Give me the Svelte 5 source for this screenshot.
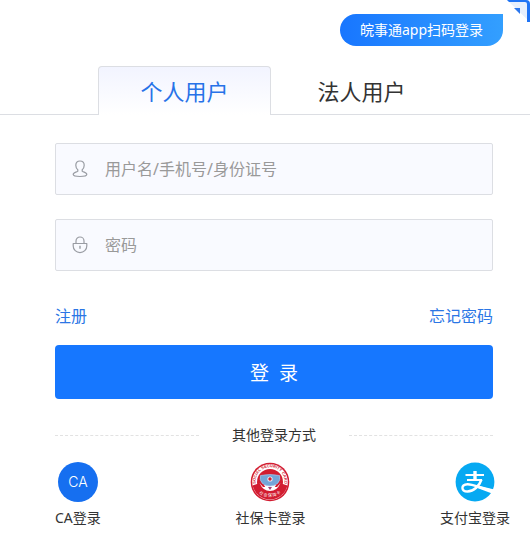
<script>
  let username = $state('');
  let password = $state('');
  let active = $state(0);
  const tabs = ['个人用户', '法人用户'];
</script>

<main>
  <header>
    <button class="scan" type="button">皖事通app扫码登录</button>
    <a class="corner" href="#qr" aria-label="二维码">
      <svg width="24" height="24" viewBox="0 0 24 24">
        <path d="M1 0H20Q24 0 24 4V22L1 0Z" fill="#e6effd" />
        <path d="M1 0H20Q24 0 24 4V22H21V4Q21 2 19 2H3Z" fill="#1f74f5" />
        <path d="M8 8H14V14Z" fill="#2b77ee" />
      </svg>
    </a>
  </header>

  <div class="tabs" role="tablist">
    {#each tabs as tab, i}
      <button type="button" role="tab" class:active={active === i} aria-selected={active === i} onclick={() => (active = i)}>{tab}</button>
    {/each}
  </div>

  <form onsubmit={(e) => e.preventDefault()}>
    <label class="field">
      <svg width="16" height="18" viewBox="0 0 16 18" fill="none" stroke="#999ca3" stroke-width="1.2" stroke-linejoin="round">
        <path d="M8 1C5.2 1 3.8 2.8 3.8 5.3C3.8 7.3 4.6 8.8 5.8 9.8V11.2C5.3 12 1.2 12.2 1.2 14.6C1.2 16.2 4.6 16.5 8 16.5S14.8 16.2 14.8 14.6C14.8 12.2 10.7 12 10.2 11.2V9.8C11.4 8.8 12.2 7.3 12.2 5.3C12.2 2.8 10.8 1 8 1Z" />
      </svg>
      <input type="text" bind:value={username} placeholder="用户名/手机号/身份证号" aria-label="用户名/手机号/身份证号" />
    </label>
    <label class="field">
      <svg width="16" height="18" viewBox="0 0 16 18" fill="none" stroke="#999ca3" stroke-width="1.2" stroke-linejoin="round">
        <path d="M4 7.5V5A4 4 0 0 1 12 5V7.5" />
        <path d="M1.2 7.5H14.8V10A6.8 6.6 0 0 1 1.2 10Z" />
        <path d="M8 9.8V12.8" stroke-width="1.4" />
      </svg>
      <input type="password" bind:value={password} placeholder="密码" aria-label="密码" />
    </label>
    <nav class="links">
      <a href="#register">注册</a>
      <a href="#forgot">忘记密码</a>
    </nav>
    <button class="submit" type="submit">登&nbsp; 录</button>
  </form>

  <div class="divider"><span>其他登录方式</span></div>

  <nav class="others">
    <a href="#ca">
      <span class="ca">CA</span>
      <span>CA登录</span>
    </a>
    <a href="#card">
      <svg width="40" height="40" viewBox="0 0 40 40">
        <defs>
          <path id="arc-top" d="M5.8 22A14.4 14.4 0 1 1 34.2 22" />
          <path id="arc-bottom" d="M4.5 25A17 17 0 0 0 35.5 25" />
        </defs>
        <circle cx="20" cy="20" r="19.3" fill="#d21c30" />
        <circle cx="20" cy="20" r="17.8" fill="#fff" />
        <path d="M2.6 23.5L10 21H30L37.4 23.5A17.8 17.8 0 0 1 2.6 23.5Z" fill="#d21c30" />
        <circle cx="20" cy="20" r="13" fill="#d21c30" />
        <path d="M9.5 21Q13 29 20 29T30.5 21L27 25H13Z" fill="#fff" />
        <path d="M14 23L17 28H23L26 23Z" fill="#fff" />
        <path d="M10.5 13.5Q20 11.5 29.5 13.5Q31 18 27.5 21.5Q24 24 20 24T12.5 21.5Q9 18 10.5 13.5Z" fill="#73a5d8" stroke="#a9c6e6" stroke-width=".7" />
        <circle cx="20" cy="17" r="2.6" fill="#e9f0f9" />
        <circle cx="20" cy="17" r="1.7" fill="#d21c30" />
        <path d="M18 25L20 28L22 25Z" fill="#a43f75" />
        <text class="seal" fill="#d21c30"><textPath href="#arc-top" startOffset="50%" text-anchor="middle">SOCIAL SECURITY CARD</textPath></text>
        <text class="seal-cn" fill="#fff"><textPath href="#arc-bottom" startOffset="50%" text-anchor="middle">社 会 保 障 卡</textPath></text>
      </svg>
      <span>社保卡登录</span>
    </a>
    <a href="#alipay">
      <svg width="40" height="40" viewBox="0 0 40 40">
        <circle cx="20" cy="20" r="19.4" fill="#06a9f2" />
        <g fill="none" stroke="#fff">
          <path d="M10.5 13H29M12 18H27" stroke-width="2" />
          <path d="M20 9V18" stroke-width="3.4" />
          <path d="M26.5 17.5C24.5 23.5 19 29.5 12.5 29.5C6 29.5 5.5 22.5 12.5 22.2C18.5 22 25 26.5 38 29" stroke-width="2.4" />
        </g>
        <path d="M22 23.2L39.2 27.5Q38.5 29.5 37 31.5L21 25.5Z" fill="#fff" />
      </svg>
      <span>支付宝登录</span>
    </a>
  </nav>
</main>

<style>
  :global(body) { margin: 0; background: #fff; }
  main {
    font-family: "Noto Sans", "Noto Sans CJK SC", sans-serif;
    font-size: 14px;
    color: #333;
  }
  button, input { font: inherit; margin: 0; box-sizing: border-box; }
  button { cursor: pointer; border: 0; padding: 0; }
  a { color: #2b76e5; text-decoration: none; }
  header {
    position: relative;
    display: flex;
    justify-content: flex-end;
    padding: 14px 27px 20px;
  }
  .scan {
    height: 32px;
    padding: 0 20px 2px;
    color: #fff;
    background: linear-gradient(90deg, #1876ff, #339fff);
    border-radius: 16px 0 16px 16px;
  }
  .corner { position: absolute; top: 0; right: 0; }
  .corner svg, .others svg, .field svg { display: block; flex: none; }
  .tabs {
    display: flex;
    gap: 4px;
    padding-left: 98px;
    border-bottom: 1px solid #dcdee3;
  }
  .tabs button {
    width: 173px;
    height: 49px;
    margin-bottom: -1px;
    padding-bottom: 2px;
    font-size: 22px;
    color: #333;
    background: none;
    border: 1px solid transparent;
    border-bottom: 0;
    border-radius: 4px 4px 0 0;
  }
  .tabs .active {
    color: #2772e8;
    border-color: #dcdee3;
    background: linear-gradient(#f2f4ff, #fff);
  }
  form { padding: 28px 37px 0 55px; }
  .field {
    display: flex;
    align-items: center;
    gap: 17px;
    box-sizing: border-box;
    height: 52px;
    margin-bottom: 24px;
    padding: 0 16px;
    background: #f9faff;
    border: 1px solid #dcdee3;
    border-radius: 2px;
  }
  input {
    flex: 1;
    min-width: 0;
    height: 48px;
    padding: 0;
    border: 0;
    outline: 0;
    background: none;
    font-size: 16px;
    color: #333;
  }
  input::placeholder { color: #999; opacity: 1; }
  .links {
    display: flex;
    justify-content: space-between;
    padding: 8px 0 16px;
    font-size: 16px;
    line-height: 26px;
  }
  .submit {
    width: 100%;
    height: 54px;
    font-size: 19px;
    color: #fff;
    background: #1677ff;
    border-radius: 4px;
  }
  .divider {
    display: flex;
    align-items: center;
    gap: 33px;
    padding: 24px 37px 15px 55px;
    line-height: 24px;
  }
  .divider::before, .divider::after {
    content: "";
    flex: 1;
    border-top: 1px dashed #e2e2e2;
  }
  .others {
    display: flex;
    justify-content: space-between;
    padding: 0 20px 16px 55px;
  }
  .others a {
    display: flex;
    flex-direction: column;
    align-items: center;
    gap: 4px;
    line-height: 24px;
    color: #333;
  }
  .others .ca {
    width: 40px;
    height: 40px;
    border-radius: 50%;
    background: #166ff0;
    color: #fff;
    font: 300 14px/40px Inter, sans-serif;
    text-align: center;
  }
  .seal { font: bold 4px "Liberation Sans", sans-serif; }
  .seal-cn { font: 4px "Noto Sans CJK SC", sans-serif; }
</style>
